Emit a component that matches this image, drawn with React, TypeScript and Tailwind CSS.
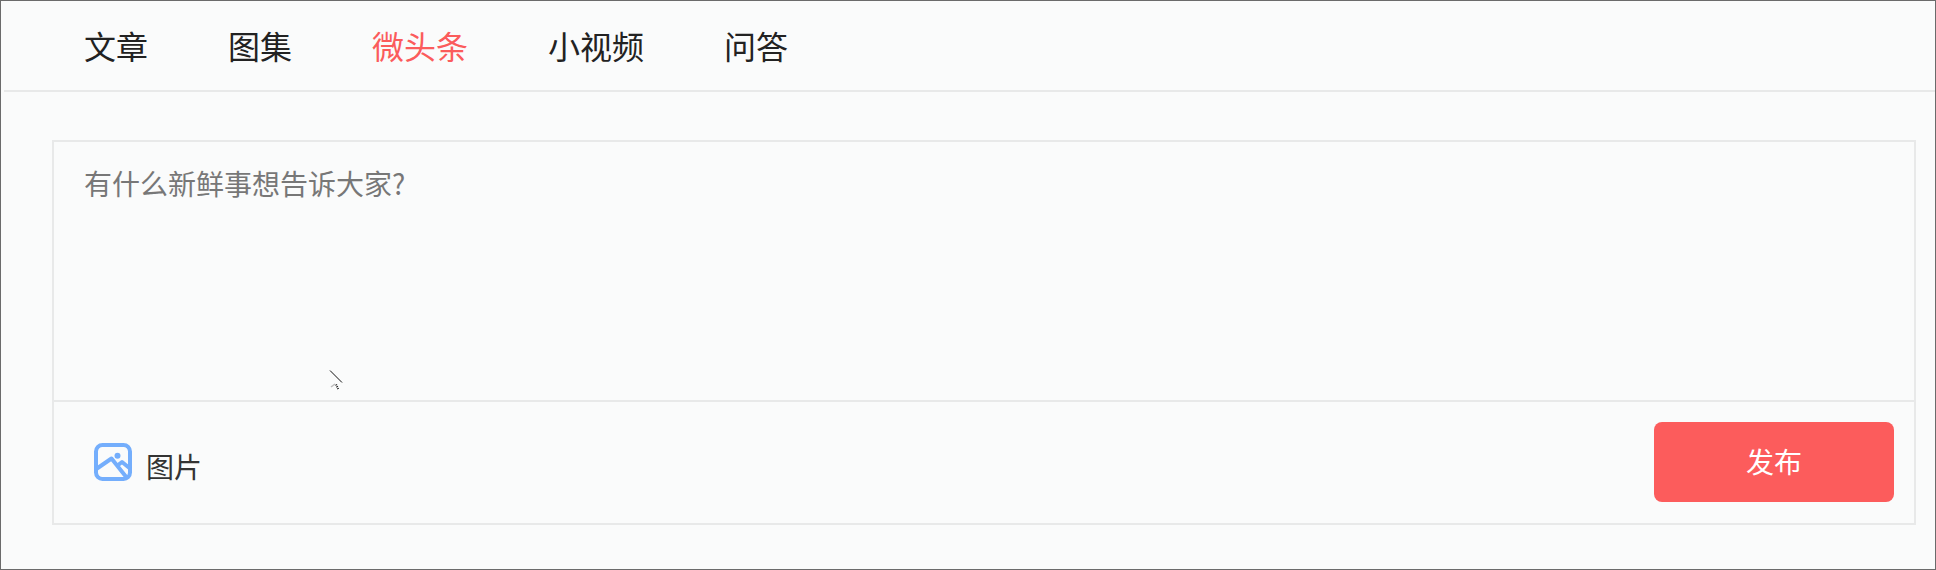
const FONT = "font-['Microsoft_YaHei','Noto_Sans_CJK_SC',sans-serif]"

const TABS = ['文章', '图集', '微头条', '小视频', '问答']

function ImageIcon() {
  return (
    <svg width="38" height="38" viewBox="0 0 38 38" fill="none" stroke="#74aefc" strokeWidth="4">
      <rect x="2" y="2" width="34" height="34" rx="6.5" />
      <path d="M3 25.5 L17.5 15.5 L33 35" strokeLinejoin="round" />
      <path d="M23.5 22.5 L28 19 L36 25.5" strokeLinejoin="round" />
      <circle cx="23.5" cy="12.7" r="3" fill="#74aefc" stroke="none" />
    </svg>
  )
}

export default function App() {
  return (
    <div className={`${FONT} relative h-[570px] w-[1936px] overflow-hidden border border-[#6b6b6b] bg-[#fafbfb]`}>
      <div className="ml-[3px] box-content flex h-[89px] items-center gap-20 border-b-2 border-[#e8e9e9] pl-[80px]">
        {TABS.map(t => (
          <span key={t} className={`mb-[2px] text-[32px] leading-none ${t === '微头条' ? 'text-[#fb5c5c]' : 'text-[#222222]'}`}>
            {t}
          </span>
        ))}
      </div>

      <div className="ml-[51px] mr-[19px] mt-[48px] border-2 border-[#e8e9e9]">
        <div className="h-[258px] px-[30px] pt-[23px] text-[28px] leading-[36px] text-[#777777]">
          有什么新鲜事想告诉大家?
        </div>
        <div className="flex h-[123px] items-center justify-between border-t-2 border-[#e8e9e9] pl-[40px] pr-[20px]">
          <div className="mt-[1px] flex items-start gap-[14px]">
            <ImageIcon />
            <span className="mt-[6px] text-[28px] leading-[34px] text-[#333333]">图片</span>
          </div>
          <button className="mb-[2px] h-[80px] w-[240px] rounded-lg bg-[#fc5c5c] pb-[2px] text-[28px] text-white">发布</button>
        </div>
      </div>

      {/* stray cursor left in the capture */}
      <svg className="absolute left-[325px] top-[366px]" width="20" height="26" viewBox="0 0 20 26" fill="none">
        <path d="M4 3.5 L16 15.5" stroke="#111" strokeWidth="1" />
        <path d="M5 20 L9 17" stroke="#bbb" strokeWidth="1.5" />
        <path d="M10 17.5 L12.5 22.5" stroke="#222" strokeWidth="2" strokeDasharray="1 1" />
      </svg>
    </div>
  )
}
